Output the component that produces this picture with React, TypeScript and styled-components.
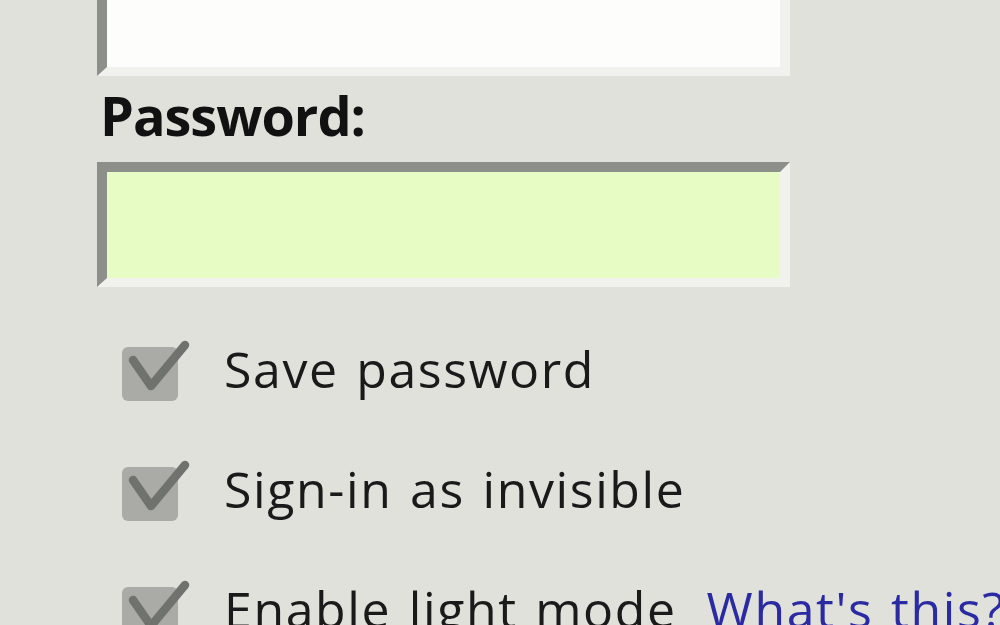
import React from 'react';
import styled, { createGlobalStyle } from 'styled-components';

const GlobalStyle = createGlobalStyle`
  html, body {
    margin: 0;
    padding: 0;
    background: #e1e1dc;
    overflow: hidden;
  }
  body {
    font-family: "Open Sans", "DejaVu Sans", sans-serif;
    color: #141414;
  }
`;

const Page = styled.div`
  width: 1000px;
  height: 625px;
  overflow: hidden;
  background: #e1e1dc;
`;

const Form = styled.div`
  width: 693px;
  margin: -49px 0 0 97px;
  display: flex;
  flex-direction: column;
`;

const TextField = styled.div<{ $fill: string }>`
  box-sizing: border-box;
  height: 125px;
  background: ${p => p.$fill};
  border-style: solid;
  border-width: 10px 10px 9px 10px;
  border-color: #8d8f8b #f1f1ed #f1f1ed #8d8f8b;
`;

const FieldLabel = styled.div`
  font-size: 54px;
  font-weight: 700;
  line-height: 56px;
  letter-spacing: -1px;
  margin: 11px 0 19px 3px;
  color: #111;
`;

const OptionList = styled.div`
  display: flex;
  flex-direction: column;
  margin-top: 27px;
`;

const OptionRow = styled.div`
  height: 120px;
  display: flex;
  align-items: center;
  padding-left: 25px;
  flex-shrink: 0;
`;

const CheckBox = styled.div`
  position: relative;
  width: 56px;
  height: 54px;
  border-radius: 6px;
  background: #aaaba7;
  flex-shrink: 0;

  svg {
    position: absolute;
    left: 0;
    top: -10px;
    overflow: visible;
  }
`;

const OptionText = styled.span`
  margin: -10px 0 0 46px;
  font-size: 50px;
  line-height: 50px;
  letter-spacing: 1.6px;
  word-spacing: 3px;
  color: #1a1a1a;
  white-space: nowrap;
`;

const HelpLink = styled.span`
  margin: -10px 0 0 30px;
  font-size: 50px;
  line-height: 50px;
  letter-spacing: 1.6px;
  word-spacing: 3px;
  color: #2a2aa2;
  white-space: nowrap;
`;

const Check = () => (
  <svg width="70" height="64" viewBox="0 0 70 64">
    <path
      d="M11 23 L29 49 L63 8"
      fill="none"
      stroke="#70726e"
      strokeWidth="8.5"
      strokeLinecap="round"
      strokeLinejoin="round"
    />
  </svg>
);

const options = ['Save password', 'Sign-in as invisible', 'Enable light mode'];

export default function App() {
  return (
    <Page>
      <GlobalStyle />
      <Form>
        <TextField $fill="#fdfdfb" />
        <FieldLabel>Password:</FieldLabel>
        <TextField $fill="#e7fcc5" />
        <OptionList>
          {options.map((label, i) => (
            <OptionRow key={label}>
              <CheckBox>
                <Check />
              </CheckBox>
              <OptionText>{label}</OptionText>
              {i === options.length - 1 && <HelpLink>What's this?</HelpLink>}
            </OptionRow>
          ))}
        </OptionList>
      </Form>
    </Page>
  );
}
